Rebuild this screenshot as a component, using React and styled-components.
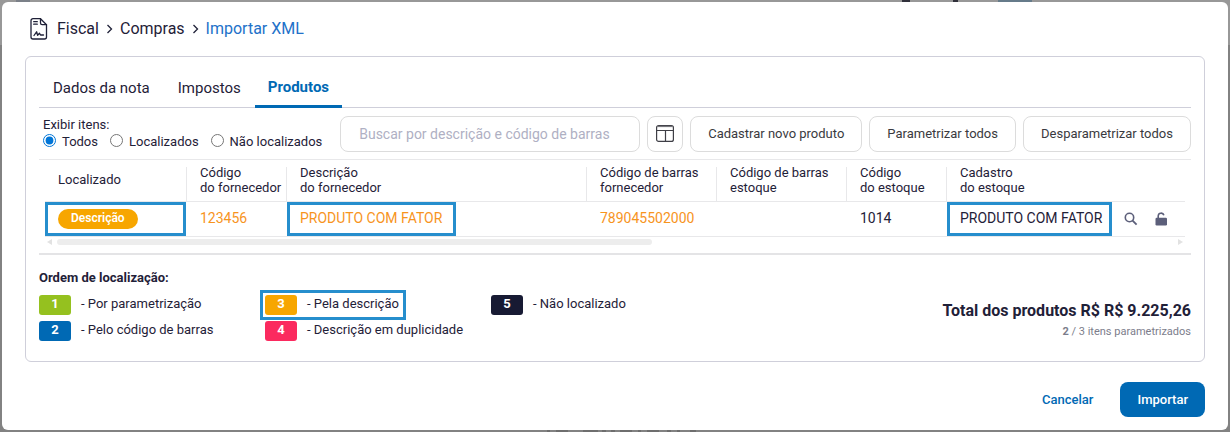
import React from "react";
import styled, { createGlobalStyle, css } from "styled-components";

const ink = "#1f2138";
const blue = "#0069b4";
const mark = "#268ecd";
const line = "#cfcfda";
const soft = "#e8e8ea";

const GlobalStyle = createGlobalStyle`
  * { box-sizing: border-box; }
  body {
    margin: 0;
    font-family: Roboto, "Liberation Sans", sans-serif;
    font-size: 13px;
    line-height: 16px;
    color: ${ink};
    background: #808080;
  }
  button, input { font-family: inherit; font-size: inherit; color: inherit; }
`;

const Page = styled.div`
  position: relative;
  min-height: 100vh;
  padding: 2px;
  background: linear-gradient(#989898 45px, #828282 45px);
`;

const Peek = styled.span`
  position: absolute;
  top: ${(p) => (p.$low ? "auto" : "0")};
  bottom: ${(p) => (p.$low ? "0" : "auto")};
  left: ${(p) => p.$left}px;
  width: ${(p) => p.$w}px;
  height: 2px;
  background: ${(p) => p.$color};
`;

const Dialog = styled.main`
  position: relative;
  padding: 15px 23px 13px;
  border-radius: 6px;
  background: #fff;
`;

const Breadcrumb = styled.nav`
  display: flex;
  align-items: center;
  height: 24px;
  padding-left: 5px;
  font-size: 16px;
  line-height: 24px;
  svg { display: block; flex: none; }
`;

const DocIcon = styled.svg`
  margin-right: 9px;
`;

const Crumb = styled.a`
  color: ${(p) => (p.$current ? "#2271c9" : ink)};
  text-decoration: none;
`;

const Chevron = styled.svg`
  margin: 0 7px;
`;

const Panel = styled.section`
  margin-top: 15px;
  padding: 12px 13px 20px;
  border: 1px solid ${line};
  border-radius: 6px;
`;

const Tabs = styled.div`
  display: flex;
  height: 39px;
  border-bottom: 1px solid ${line};
`;

const Tab = styled.button`
  height: 39px;
  padding: ${(p) => (p.$active ? "0 13px" : "2px 14px 0")};
  border: 0;
  border-bottom: 3px solid ${(p) => (p.$active ? blue : "transparent")};
  background: none;
  font-size: 15px;
  font-weight: ${(p) => (p.$active ? 700 : 400)};
  color: ${(p) => (p.$active ? blue : ink)};
`;

const Toolbar = styled.div`
  display: flex;
  align-items: center;
  gap: 7px;
  height: 52px;
  border-bottom: 1px solid ${soft};
`;

const Filter = styled.fieldset`
  flex: 1;
  min-width: 0;
  margin: 0;
  padding: 0 0 0 4px;
  border: 0;
  white-space: nowrap;
  legend { padding: 0; }
`;

const Options = styled.div`
  display: flex;
  gap: 12px;
`;

const Option = styled.label`
  display: flex;
  align-items: center;
  gap: 6px;
  height: 18px;
  input { width: 13px; height: 13px; margin: 0 0 2px; accent-color: #0075d7; }
`;

const Search = styled.input`
  width: 300px;
  height: 36px;
  padding: 0 18px;
  border: 1px solid #dcdcdc;
  border-radius: 8px;
  background: #fff;
  font-size: 14px;
  &::placeholder { color: #afb0c3; opacity: 1; }
`;

const Button = styled.button`
  display: flex;
  align-items: center;
  justify-content: center;
  flex: none;
  height: 36px;
  padding: 0 ${(p) => (p.$icon ? 8 : 17)}px;
  border: 1px solid #dcdcdc;
  border-radius: 8px;
  background: #fff;
  color: #3a3a40;
`;

const TableWrap = styled.div`
  padding: 0 6px;
  overflow: hidden;
`;

const Table = styled.table`
  width: 100%;
  table-layout: fixed;
  border-collapse: separate;
  border-spacing: 0;
`;

const Th = styled.th`
  width: ${(p) => (p.$w ? `${p.$w}px` : "auto")};
  height: 42px;
  padding: 0 0 2px 13px;
  border-bottom: 1px solid ${soft};
  font-weight: 400;
  line-height: 15px;
  text-align: left;
  white-space: pre-line;
  ${(p) => p.$w && css`
    background: linear-gradient(${soft}, ${soft}) right bottom / 1px 34px no-repeat;
  `}
`;

const Td = styled.td`
  height: 35px;
  padding: ${(p) => (p.$flush ? "0" : "0 0 2px 13px")};
  border-bottom: 1px solid ${soft};
  font-size: 14px;
  color: ${(p) => (p.$warn ? "#f7941d" : ink)};
  white-space: nowrap;
`;

const CellRow = styled.div`
  display: flex;
  align-items: center;
`;

const Marked = styled.div`
  display: flex;
  align-items: center;
  width: ${(p) => (p.$fill ? "calc(100% - 1px)" : "max-content")};
  height: 34px;
  padding: 0 ${(p) => (p.$tight ? 7 : 11)}px ${(p) => (p.$fill ? 0 : 2)}px 10px;
  border: 3px solid ${mark};
`;

const Pill = styled.span`
  height: 20px;
  padding: 0 13px;
  border-radius: 10px;
  background: #f7a600;
  color: #fff;
  font-size: 12px;
  font-weight: 600;
  line-height: 18px;
`;

const IconButton = styled.button`
  display: block;
  margin-left: ${(p) => p.$gap}px;
  padding: 0;
  border: 0;
  background: none;
  svg { display: block; }
`;

const ScrollRow = styled.div`
  display: flex;
  align-items: center;
  justify-content: space-between;
  height: 18px;
  padding: 0 8px 7px;
  border-bottom: 2px solid #e4e4e6;
`;

const ScrollTrack = styled.div`
  flex: 1;
  margin: 0 5px;
`;

const ScrollThumb = styled.div`
  width: calc(53% + 4px);
  height: 6px;
  border-radius: 3px;
  background: #ededed;
`;

const Summary = styled.div`
  display: flex;
  justify-content: space-between;
  padding-top: 15px;
`;

const LegendTitle = styled.h2`
  margin: 0 0 9px;
  font-size: 13px;
  line-height: 16px;
  font-weight: 700;
`;

const LegendGrid = styled.ul`
  display: grid;
  grid-auto-flow: column;
  grid-template-rows: 20px 20px;
  grid-auto-columns: 226px;
  gap: 6px 0;
  margin: 0;
  padding: 0;
  list-style: none;
`;

const LegendItem = styled.li`
  display: flex;
  justify-self: start;
  gap: 10px;
  padding-right: 2px;
  line-height: 18px;
  white-space: nowrap;
  ${(p) => p.$marked && css`
    outline: 3px solid ${mark};
    outline-offset: 2px;
  `}
`;

const Badge = styled.span`
  width: 32px;
  height: 20px;
  border-radius: 3px;
  background: ${(p) => p.$color};
  color: #fff;
  font-weight: 700;
  text-align: center;
`;

const Totals = styled.div`
  padding-top: 31px;
  text-align: right;
`;

const Total = styled.div`
  font-size: 16px;
  line-height: 20px;
  font-weight: 700;
`;

const Count = styled.div`
  padding-top: 3px;
  font-size: 11px;
  color: #7c7d8b;
`;

const Footer = styled.footer`
  display: flex;
  justify-content: flex-end;
  gap: 10px;
  padding-top: 20px;
`;

const Action = styled.button`
  height: 35px;
  padding: 0 17px;
  border: 0;
  border-radius: 8px;
  background: ${(p) => (p.$primary ? blue : "none")};
  color: ${(p) => (p.$primary ? "#fff" : blue)};
  font-weight: 500;
`;

const Arrow = () => (
  <Chevron width="7" height="10" viewBox="0 0 7 10" fill="none" stroke={ink} strokeWidth="1.3">
    <path d="M1.500 1l4 4-4 4" />
  </Chevron>
);

const columns = [
  ["Localizado", 142],
  ["Código\ndo fornecedor", 100],
  ["Descrição\ndo fornecedor", 300],
  ["Código de barras\nfornecedor", 130],
  ["Código de barras\nestoque", 130],
  ["Código\ndo estoque", 100],
  ["Cadastro\ndo estoque", 0],
];

const legend = [
  ["1", "Por parametrização", "#95c11f"],
  ["2", "Pelo código de barras", "#0069b4"],
  ["3", "Pela descrição", "#f7a600"],
  ["4", "Descrição em duplicidade", "#fb2a5f"],
  ["5", "Não localizado", "#171a33"],
];

const peeks = [
  [16, 14, "#7b8088"],
  [902, 8, "#30303a"],
  [953, 5, "#30303a"],
  [998, 34, "#667b8a"],
];

const lowPeeks = [[547, 3], [556, 12], [583, 15], [602, 4], [611, 4], [620, 12], [638, 3], [647, 12], [667, 4], [677, 3], [690, 6]];

export default function App() {
  return (
    <Page>
      <GlobalStyle />
      {peeks.map(([x, w, c]) => <Peek key={x} $left={x} $w={w} $color={c} />)}
      {lowPeeks.map(([x, w]) => <Peek key={x} $low $left={x} $w={w} $color="#6e6e6e" />)}
      <Dialog>
        <Breadcrumb aria-label="Navegação">
          <DocIcon width="18" height="24" viewBox="0 0 18 24" fill="none" stroke={ink} strokeWidth="1.3" strokeLinejoin="round" strokeLinecap="round">
            <path d="M10.500 1.700H3A2 2 0 0 0 1 3.700V20a2 2 0 0 0 2 2h11.500a2 2 0 0 0 2-2V7.700z" />
            <path d="M10.500 1.700V6a1.700 1.700 0 0 0 1.700 1.700h4.300M3.700 4.700h3.600M3.700 7.200h3.600" />
            <path d="M4 18.500l2.600-3.700 1 3.500 1.900-2 1 1.700h3" />
          </DocIcon>
          <Crumb href="#fiscal">Fiscal</Crumb>
          <Arrow />
          <Crumb href="#compras">Compras</Crumb>
          <Arrow />
          <Crumb href="#importar" $current>Importar XML</Crumb>
        </Breadcrumb>

        <Panel>
          <Tabs role="tablist">
            <Tab role="tab">Dados da nota</Tab>
            <Tab role="tab">Impostos</Tab>
            <Tab role="tab" aria-selected="true" $active>Produtos</Tab>
          </Tabs>

          <Toolbar>
            <Filter>
              <legend>Exibir itens:</legend>
              <Options>
                <Option><input type="radio" name="itens" defaultChecked />Todos</Option>
                <Option><input type="radio" name="itens" />Localizados</Option>
                <Option><input type="radio" name="itens" />Não localizados</Option>
              </Options>
            </Filter>
            <Search aria-label="Buscar" placeholder="Buscar por descrição e código de barras" />
            <Button $icon aria-label="Colunas">
              <svg width="18" height="17" viewBox="0 0 18 17" fill="none" stroke="#3f3f46" strokeWidth="1.2">
                <rect x="0.600" y="0.600" width="16.800" height="15.800" rx="2" />
                <path d="M1 1.500h16" stroke="#77777c" />
                <path d="M1 5.500h16M9.500 5.500V16" />
              </svg>
            </Button>
            <Button>Cadastrar novo produto</Button>
            <Button>Parametrizar todos</Button>
            <Button>Desparametrizar todos</Button>
          </Toolbar>

          <TableWrap>
            <Table>
              <thead>
                <tr>{columns.map(([t, w]) => <Th key={t} $w={w}>{t}</Th>)}</tr>
              </thead>
              <tbody>
                <tr>
                  <Td $flush><Marked $fill><Pill>Descrição</Pill></Marked></Td>
                  <Td $warn>123456</Td>
                  <Td $warn $flush><Marked>PRODUTO COM FATOR</Marked></Td>
                  <Td $warn>789045502000</Td>
                  <Td />
                  <Td>1014</Td>
                  <Td $flush>
                    <CellRow>
                      <Marked $tight>PRODUTO COM FATOR</Marked>
                      <IconButton $gap={12} aria-label="Pesquisar">
                        <svg width="14" height="15" viewBox="0 0 14 15" fill="none" stroke="#5c5f7a" strokeWidth="1.600">
                          <circle cx="5.500" cy="5.500" r="4.200" />
                          <path d="M8.600 8.600l4 4" strokeWidth="1.900" />
                        </svg>
                      </IconButton>
                      <IconButton $gap={17} aria-label="Desbloquear">
                        <svg width="13" height="15" viewBox="0 0 13 15">
                          <rect x="0.500" y="5.800" width="11.500" height="7.700" rx="1.200" fill="#5c5f7a" />
                          <path d="M3.200 6.500V4a2.900 2.900 0 0 1 5.700-.700" fill="none" stroke="#5c5f7a" strokeWidth="1.600" />
                        </svg>
                      </IconButton>
                    </CellRow>
                  </Td>
                </tr>
              </tbody>
            </Table>
          </TableWrap>

          <ScrollRow aria-hidden="true">
            <svg width="5" height="6" viewBox="0 0 5 6"><path d="M5 0v6L0 3z" fill="#e2e2e2" /></svg>
            <ScrollTrack><ScrollThumb /></ScrollTrack>
            <svg width="5" height="6" viewBox="0 0 5 6"><path d="M0 0v6l5-3z" fill="#e2e2e2" /></svg>
          </ScrollRow>

          <Summary>
            <div>
              <LegendTitle>Ordem de localização:</LegendTitle>
              <LegendGrid>
                {legend.map(([n, t, c]) => (
                  <LegendItem key={n} $marked={n === "3"}>
                    <Badge $color={c}>{n}</Badge>
                    <span>- {t}</span>
                  </LegendItem>
                ))}
              </LegendGrid>
            </div>
            <Totals>
              <Total>Total dos produtos R$ R$ 9.225,26</Total>
              <Count><b>2</b> / 3 itens parametrizados</Count>
            </Totals>
          </Summary>
        </Panel>

        <Footer>
          <Action>Cancelar</Action>
          <Action $primary>Importar</Action>
        </Footer>
      </Dialog>
    </Page>
  );
}
